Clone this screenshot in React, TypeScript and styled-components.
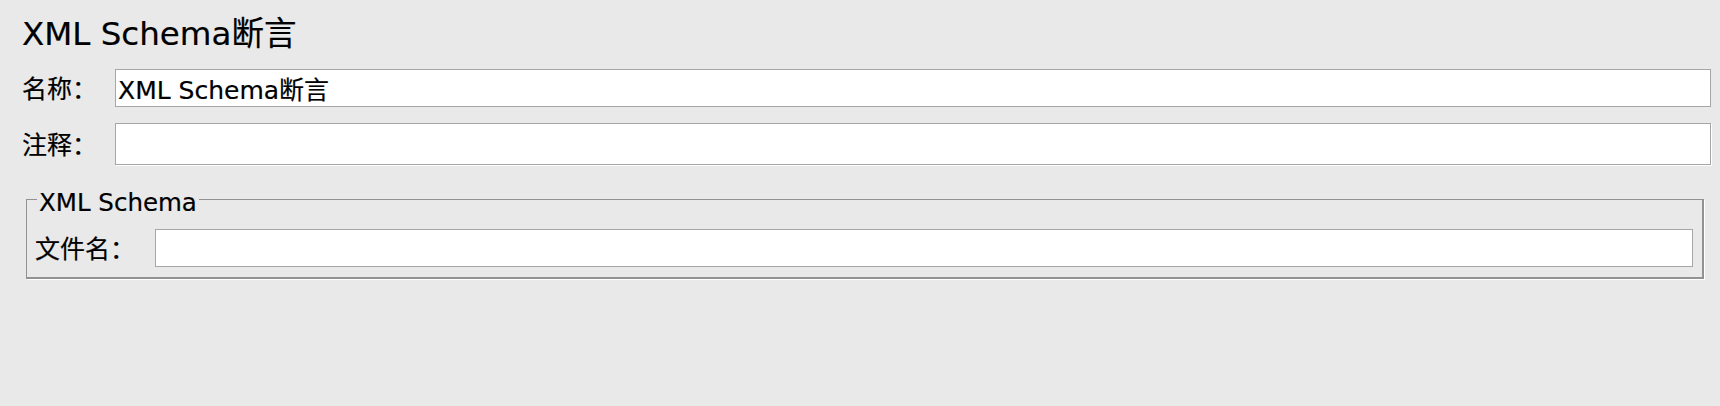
import React from "react";
import styled, { createGlobalStyle } from "styled-components";

// --- Estilos globais ---
const GlobalStyle = createGlobalStyle`
  html, body {
    margin: 0;
    background-color: #e9e9e9;
  }
  body {
    font-family: "DejaVu Sans", "Noto Sans CJK SC", sans-serif;
    color: #000;
    -webkit-text-stroke: 0.2px #000;
  }
`;

// --- Estilos dos Componentes ---
const Page = styled.div`
  box-sizing: border-box;
  height: 406px;
  padding: 14px 9px 0 22px;
`;

const Title = styled.h1`
  margin: 0 0 15px;
  font-size: 32.5px;
  font-weight: normal;
  line-height: 40px;
`;

const FieldRow = styled.div<{ $labelWidth: number; $gap?: number }>`
  display: grid;
  grid-template-columns: ${(p) => p.$labelWidth}px 1fr;
  align-items: center;
  margin-bottom: ${(p) => p.$gap ?? 0}px;
`;

const Label = styled.label`
  padding-top: 3px;
  font-size: 25px;
  line-height: 30px;
  white-space: nowrap;
`;

const TextField = styled.input<{ $height: number; $etched?: boolean }>`
  box-sizing: border-box;
  width: 100%;
  height: ${(p) => p.$height}px;
  margin: 0;
  padding: 0 2px;
  border: 1px solid #a6a6a6;
  background-color: #fff;
  font-family: inherit;
  font-size: 25px;
  color: #000;
  outline: none;
  box-shadow: ${(p) => (p.$etched ? "1px 1px 0 #fff" : "none")};
`;

const Group = styled.fieldset`
  margin: 19px 7px 0 4px;
  padding: 14px 9px 10px 8px;
  border-style: solid;
  border-color: #929292;
  border-width: 1px 2px 2px 1px;
  box-shadow: 1px 1px 0 #fff;
`;

const GroupTitle = styled.legend`
  margin-left: 2px;
  padding: 7px 2px 0;
  font-size: 24.5px;
  line-height: 24px;
`;

// --- Componente da Página ---
function App() {
  return (
    <Page>
      <GlobalStyle />
      <Title>XML Schema断言</Title>
      <FieldRow $labelWidth={93} $gap={16}>
        <Label>名称：</Label>
        <TextField $height={38} defaultValue="XML Schema断言" />
      </FieldRow>
      <FieldRow $labelWidth={93}>
        <Label>注释：</Label>
        <TextField $height={42} $etched defaultValue="" />
      </FieldRow>
      <Group>
        <GroupTitle>XML Schema</GroupTitle>
        <FieldRow $labelWidth={120}>
          <Label>文件名：</Label>
          <TextField $height={38} defaultValue="" />
        </FieldRow>
      </Group>
    </Page>
  );
}

export default App;
